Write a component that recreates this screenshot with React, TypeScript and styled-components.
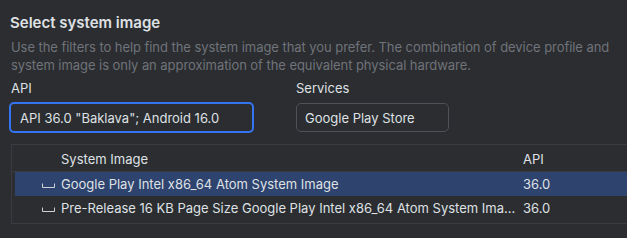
import styled, { createGlobalStyle } from 'styled-components';

const GlobalStyle = createGlobalStyle`
  html, body {
    margin: 0;
    padding: 0;
    background: #2b2d30;
    overflow: hidden;
  }
  body {
    font-family: Inter, 'Noto Sans', sans-serif;
    font-size: 13px;
    color: #dfe1e5;
  }
`;

type ImageRow = { name: string; api: string; selected?: boolean };

const rows: ImageRow[] = [
  { name: 'Google Play Intel x86_64 Atom System Image', api: '36.0', selected: true },
  {
    name: 'Pre-Release 16 KB Page Size Google Play Intel x86_64 Atom System Image',
    api: '36.0',
  },
];

function SlotIcon() {
  return (
    <svg width='13' height='5' viewBox='0 0 13 5' fill='none'>
      <path d='M0.5 0.5V4.5H12.5V0.5' stroke='#cfd1d4' strokeWidth='1' />
    </svg>
  );
}

export default function App() {
  return (
    <Page>
      <GlobalStyle />
      <Title>Select system image</Title>
      <Description>
        Use the filters to help find the system image that you prefer. The combination of device
        profile and system image is only an approximation of the equivalent physical hardware.
      </Description>
      <Filters>
        <Field>
          <Label>API</Label>
          <Combo $focused>API 36.0 "Baklava"; Android 16.0</Combo>
        </Field>
        <Field>
          <Label>Services</Label>
          <Combo $width={153}>Google Play Store</Combo>
        </Field>
      </Filters>
      <Table>
        <HeaderRow>
          <IconCell />
          <NameCell>System Image</NameCell>
          <ApiCell>API</ApiCell>
        </HeaderRow>
        {rows.map((row) => (
          <Row key={row.name} $selected={row.selected}>
            <IconCell>
              <SlotIcon />
            </IconCell>
            <NameCell>{row.name}</NameCell>
            <ApiCell>{row.api}</ApiCell>
          </Row>
        ))}
      </Table>
    </Page>
  );
}

const Page = styled.div`
  width: 627px;
  height: 238px;
  padding: 14px 0 0 11px;
  box-sizing: border-box;
`;

const Title = styled.div`
  font-size: 15px;
  font-weight: 600;
  line-height: 18px;
  margin-left: -1px;
`;

const Description = styled.div`
  margin-top: 7px;
  width: 612px;
  color: #6f737a;
  line-height: 17.5px;
  letter-spacing: -0.06px;
`;

const Filters = styled.div`
  display: flex;
  gap: 42px;
  margin-top: 6px;
`;

const Field = styled.div`
  display: flex;
  flex-direction: column;
  gap: 6px;
`;

const Label = styled.div`
  line-height: 16px;
`;

const Combo = styled.div<{ $focused?: boolean; $width?: number }>`
  box-sizing: border-box;
  height: ${(p) => (p.$focused ? 31 : 29)}px;
  margin: ${(p) => (p.$focused ? '0 0 0 -2px' : '1px 0 0 0')};
  width: ${(p) => (p.$width ? `${p.$width}px` : '245px')};
  display: flex;
  align-items: center;
  padding-left: ${(p) => (p.$focused ? 9 : 8)}px;
  border: ${(p) => (p.$focused ? '2px solid #3574f0' : '1px solid #4e5157')};
  border-radius: 5px;
  white-space: nowrap;
`;

const Table = styled.div`
  margin-top: 11px;
  width: 640px;
  box-sizing: border-box;
  border: 1px solid #393b40;
  padding: 0 0 3px 3px;
`;

const HeaderRow = styled.div`
  display: flex;
  align-items: center;
  height: 27px;
  padding-top: 2px;
  box-sizing: border-box;
  border-bottom: 1px solid #393b40;
  margin-left: -3px;
  padding-left: 3px;
`;

const Row = styled.div<{ $selected?: boolean }>`
  display: flex;
  align-items: center;
  height: 24px;
  background: ${(p) => (p.$selected ? '#2e436e' : 'transparent')};
`;

const IconCell = styled.div`
  width: 46px;
  flex: none;
  display: flex;
  justify-content: flex-end;
  padding-right: 6px;
  box-sizing: border-box;
  padding-top: 3px;
`;

const NameCell = styled.div`
  width: 458px;
  flex: none;
  white-space: nowrap;
  overflow: hidden;
  text-overflow: ellipsis;
  padding-right: 2px;
  box-sizing: border-box;
`;

const ApiCell = styled.div`
  padding-left: 4px;
`;
